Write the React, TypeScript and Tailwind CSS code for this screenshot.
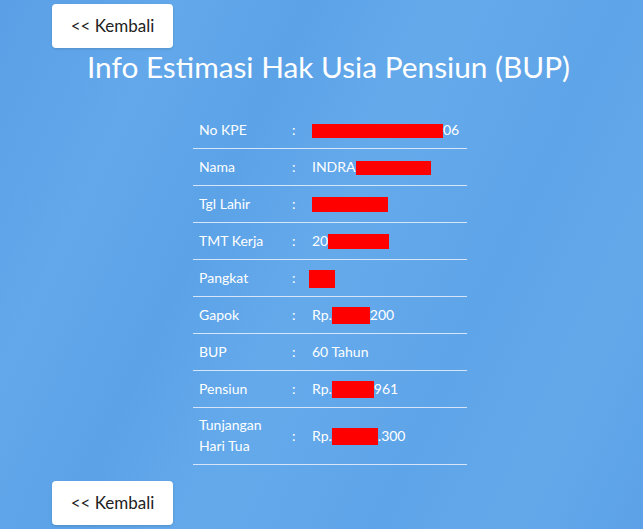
import React from 'react'

type Row = { label: React.ReactNode; value: React.ReactNode }

function Redact({ w, h = 14, className = '' }: { w: number; h?: number; className?: string }) {
  return <span className={`inline-block bg-[#ff0000] align-middle ${className}`} style={{ width: w, height: h }} />
}

function BackButton() {
  return (
    <button className="h-[44px] w-[121px] rounded-[4px] bg-white text-[17px] text-[#222] shadow-sm">
      &lt;&lt; Kembali
    </button>
  )
}

export default function App() {
  const rows: Row[] = [
    { label: 'No KPE', value: <><Redact w={131} />06</> },
    { label: 'Nama', value: <>INDRA<Redact w={75} /></> },
    { label: 'Tgl Lahir', value: <Redact w={76} h={15} /> },
    { label: 'TMT Kerja', value: <>20<Redact w={61} h={15} /></> },
    { label: 'Pangkat', value: <Redact w={26} h={18} className="-ml-[3px]" /> },
    { label: 'Gapok', value: <>Rp.<Redact w={38} h={17} />200</> },
    { label: 'BUP', value: '60 Tahun' },
    { label: 'Pensiun', value: <>Rp.<Redact w={42} h={17} />961</> },
    {
      label: (
        <span className="leading-[20px]">
          Tunjangan
          <br />
          Hari Tua
        </span>
      ),
      value: <>Rp.<Redact w={46} h={17} />.300</>,
    },
  ]

  return (
    <div
      className="min-h-[529px] w-full overflow-hidden bg-[linear-gradient(115deg,#5b9fe6_0%,#62a8ea_20%,#5ca2e7_35%,#64aaeb_50%,#5ea4e8_70%,#63a9ea_85%,#5ca1e7_100%)] font-['Lato',sans-serif] text-white"
    >
      <div className="px-[52px] pt-[4px]">
        <BackButton />
      </div>
      <h1 className="mt-[1px] pl-[14px] text-center text-[29.8px] leading-[36px] font-normal">
        Info Estimasi Hak Usia Pensiun (BUP)
      </h1>
      <div className="mt-[27px] ml-[193px] w-[274px] text-[14px]">
        {rows.map((r, i) => (
          <div
            key={i}
            className={`flex items-center border-b border-[#d6e6f8] px-[6px] ${i === rows.length - 1 ? 'h-[57px]' : 'h-[37px]'}`}
          >
            <div className="w-[93px] -translate-y-[1px]">{r.label}</div>
            <div className="w-[20px] -translate-y-[1px]">:</div>
            <div className="flex-1 -translate-y-[1px] whitespace-nowrap">{r.value}</div>
          </div>
        ))}
      </div>
      <div className="px-[52px] pt-[16px] pb-[4px]">
        <BackButton />
      </div>
    </div>
  )
}
